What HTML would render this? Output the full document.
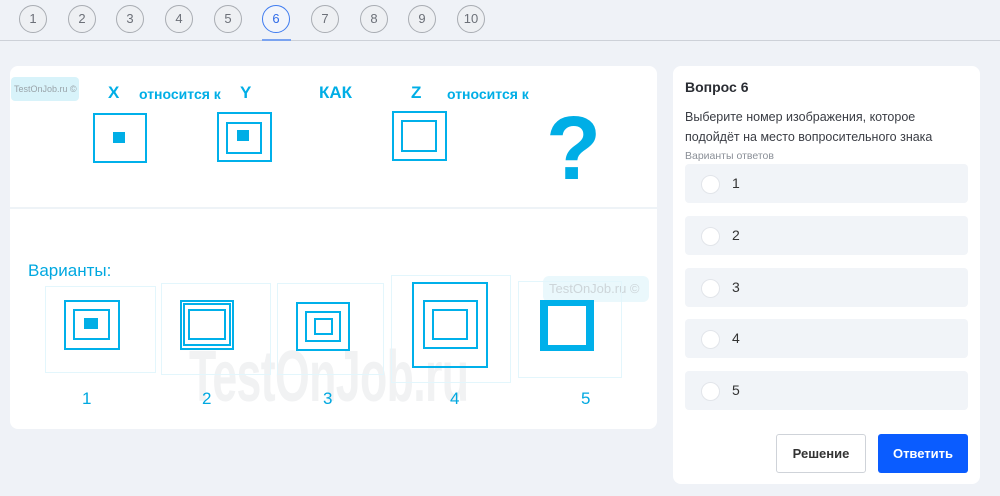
<!DOCTYPE html>
<html><head><meta charset="utf-8"><style>
*{margin:0;padding:0;box-sizing:border-box}
body{width:1000px;height:496px;background:#eff2f7;font-family:"Liberation Sans","DejaVu Sans",sans-serif;position:relative;overflow:hidden}
.a{position:absolute}
.nc{position:absolute;top:5px;width:28px;height:28px;border-radius:50%;border:1.5px solid #a9adb3;background:#eef0f3;color:#6c7078;font-size:13px;text-align:center;line-height:25px}
.card{position:absolute;background:#fff;border-radius:8px}
.b{position:absolute;border:2.5px solid #00b0ea}
.f{position:absolute;background:#00aee6}
.fr{position:absolute;border:1px solid #e3f6fc}
.t{position:absolute;color:#00aee6;font-weight:bold;font-size:17px;white-space:nowrap}
.opt{position:absolute;left:685px;width:283px;height:39px;background:#f1f4f8;border-radius:4px}
.opt i{position:absolute;left:16px;top:11px;width:19px;height:19px;border-radius:50%;background:#fff;border:1px solid #e2e5ea}
.opt span{position:absolute;left:47px;top:11px;font-size:14px;color:#333}
.n{position:absolute;top:389px;color:#00a8e0;font-size:17px}
</style></head><body>
<div class="nc" style="left:19px">1</div>
<div class="nc" style="left:68px">2</div>
<div class="nc" style="left:116px">3</div>
<div class="nc" style="left:165px">4</div>
<div class="nc" style="left:214px">5</div>
<div class="nc" style="left:262px;border-color:#3f7cf0;color:#2f6be8;background:#f2f5fb">6</div>
<div class="nc" style="left:311px">7</div>
<div class="nc" style="left:360px">8</div>
<div class="nc" style="left:408px">9</div>
<div class="nc" style="left:457px">10</div>
<div class="a" style="left:0;top:40px;width:1000px;height:1px;background:#cdd1d8"></div>
<div class="a" style="left:262px;top:39px;width:29px;height:2px;background:#7aa3f0"></div>

<div class="card" style="left:10px;top:66px;width:647px;height:363px"></div>
<div class="a" style="left:10px;top:207px;width:647px;height:2px;background:#eef3f7"></div>
<div class="a" style="left:11px;top:77px;width:68px;height:24px;background:#d8f3fa;border-radius:4px;color:#9aa4aa;font-size:9px;line-height:24px;padding-left:3px;white-space:nowrap;overflow:hidden">TestOnJob.ru ©</div>
<div class="t" style="left:108px;top:83px">X</div>
<div class="t" style="left:139px;top:86px;font-size:14px">относится к</div>
<div class="t" style="left:240px;top:83px">Y</div>
<div class="t" style="left:319px;top:83px">КАК</div>
<div class="t" style="left:411px;top:83px">Z</div>
<div class="t" style="left:447px;top:86px;font-size:14px">относится к</div>
<div class="b" style="left:93px;top:113px;width:54px;height:50px"></div>
<div class="f" style="left:113px;top:132px;width:12px;height:11px"></div>
<div class="b" style="left:217px;top:112px;width:55px;height:50px"></div>
<div class="b" style="left:226px;top:122px;width:36px;height:32px"></div>
<div class="f" style="left:237px;top:130px;width:12px;height:11px"></div>
<div class="b" style="left:392px;top:111px;width:55px;height:50px"></div>
<div class="b" style="left:401px;top:120px;width:36px;height:32px"></div>
<div class="a" style="left:546px;top:104px;color:#00aee6;font-size:90px;line-height:90px;font-weight:bold">?</div>

<div class="a" style="left:189px;top:336px;color:#f1f2f3;font-size:72px;font-weight:bold;letter-spacing:-1px;transform:scaleX(0.62);transform-origin:left top;white-space:nowrap">TestOnJob.ru</div>
<div class="a" style="left:28px;top:261px;color:#00a8e0;font-size:17px">Варианты:</div>
<div class="a" style="left:543px;top:276px;width:106px;height:26px;background:#eaf8fc;border-radius:6px;color:#cdd5d9;font-size:13px;line-height:26px;padding-left:6px;white-space:nowrap">TestOnJob.ru ©</div>
<div class="fr" style="left:45px;top:286px;width:111px;height:87px"></div>
<div class="fr" style="left:161px;top:283px;width:110px;height:92px"></div>
<div class="fr" style="left:277px;top:283px;width:107px;height:92px"></div>
<div class="fr" style="left:391px;top:275px;width:120px;height:108px"></div>
<div class="fr" style="left:518px;top:281px;width:104px;height:97px"></div>
<div class="b" style="left:64px;top:300px;width:56px;height:50px"></div>
<div class="b" style="left:73px;top:309px;width:37px;height:31px"></div>
<div class="f" style="left:84px;top:318px;width:14px;height:11px"></div>
<div class="b" style="left:180px;top:300px;width:54px;height:50px"></div>
<div class="b" style="left:183px;top:303px;width:48px;height:43px"></div>
<div class="b" style="left:188px;top:309px;width:38px;height:31px"></div>
<div class="b" style="left:296px;top:302px;width:54px;height:49px"></div>
<div class="b" style="left:305px;top:311px;width:36px;height:31px"></div>
<div class="b" style="left:314px;top:318px;width:19px;height:17px"></div>
<div class="b" style="left:412px;top:282px;width:76px;height:86px"></div>
<div class="b" style="left:423px;top:300px;width:55px;height:49px"></div>
<div class="b" style="left:432px;top:309px;width:36px;height:31px"></div>
<div class="b" style="left:540px;top:300px;width:54px;height:51px;border-width:6px 8px"></div>
<div class="n" style="left:82px">1</div>
<div class="n" style="left:202px">2</div>
<div class="n" style="left:323px">3</div>
<div class="n" style="left:450px">4</div>
<div class="n" style="left:581px">5</div>

<div class="card" style="left:673px;top:66px;width:307px;height:418px"></div>
<div class="a" style="left:685px;top:79px;font-size:14px;font-weight:bold;color:#2a2d33">Вопрос 6</div>
<div class="a" style="left:685px;top:107px;font-size:12.5px;line-height:20px;color:#3a3d44">Выберите номер изображения, которое<br>подойдёт на место вопросительного знака</div>
<div class="a" style="left:685px;top:150px;font-size:10.5px;color:#8a8f97">Варианты ответов</div>
<div class="opt" style="top:164px"><i></i><span>1</span></div>
<div class="opt" style="top:216px"><i></i><span>2</span></div>
<div class="opt" style="top:268px"><i></i><span>3</span></div>
<div class="opt" style="top:319px"><i></i><span>4</span></div>
<div class="opt" style="top:371px"><i></i><span>5</span></div>
<div class="a" style="left:776px;top:434px;width:90px;height:39px;border:1px solid #cfd3d9;border-radius:3px;background:#fff;text-align:center;line-height:37px;font-size:13px;font-weight:bold;color:#333">Решение</div>
<div class="a" style="left:878px;top:434px;width:90px;height:39px;border-radius:3px;background:#0a5cff;text-align:center;line-height:39px;font-size:13px;font-weight:bold;color:#fff">Ответить</div>
</body></html>
